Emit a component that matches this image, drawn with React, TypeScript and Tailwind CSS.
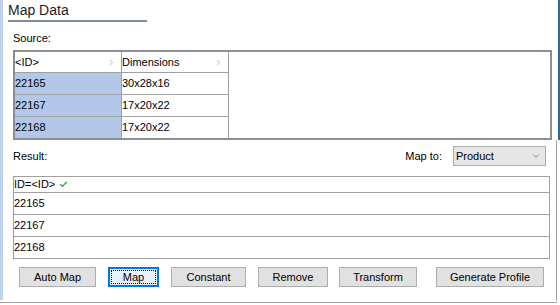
import { Check, ChevronDown, ChevronRight } from 'lucide-react'

const sourceRows = [
    { id: '22165', dim: '30x28x16' },
    { id: '22167', dim: '17x20x22' },
    { id: '22168', dim: '17x20x22' },
]

const resultRows = ['22165', '22167', '22168']

const buttons = [
    { label: 'Auto Map', w: 'w-[77px]', ml: 'ml-[11px]' },
    { label: 'Map', w: 'w-[51px]', ml: 'ml-[12px]', focused: true },
    { label: 'Constant', w: 'w-[75px]', ml: 'ml-[12px]' },
    { label: 'Remove', w: 'w-[70px]', ml: 'ml-[12px]' },
    { label: 'Transform', w: 'w-[78px]', ml: 'ml-[11px]' },
    { label: 'Generate Profile', w: 'w-[108px]', ml: 'ml-[19px]' },
]

export default function App() {
    return (
        <div className="w-[560px] h-[305px] bg-white flex flex-col text-[11px] text-black font-['Liberation_Sans',Arial,sans-serif]">
            <div className="flex h-[301px]">
                {/* Panel */}
                <div className="flex-1 flex flex-col border-l-[3px] border-l-[#bdd1ec] h-[300px] pl-[5px]">
                    {/* Title */}
                    <div className="h-[22px] flex flex-col">
                        <div className="text-[14px] leading-[18px] pt-[1px] text-[#1e1e1e]">Map Data</div>
                        <div className="mt-[1px] w-[139px] h-[2px] bg-[#7d8c9c]" />
                    </div>

                    <div className="pl-[5px] mt-[10px] leading-[13px]">Source:</div>

                    {/* Source table */}
                    <div className="ml-[5px] mt-[5px] w-[539px] h-[90px] border-2 border-[#8d8d95] flex">
                        <div className="flex flex-col">
                            <div className="flex h-[21px] border-b border-[#a0a0a0]">
                                <div className="w-[107px] border-r border-[#a0a0a0] flex items-center justify-between pr-[5px]">
                                    <span>&lt;ID&gt;</span>
                                    <ChevronRight className="w-[9px] h-[9px] text-[#9a9a9a]" strokeWidth={2} />
                                </div>
                                <div className="w-[107px] border-r border-[#a0a0a0] flex items-center justify-between pr-[5px]">
                                    <span>Dimensions</span>
                                    <ChevronRight className="w-[9px] h-[9px] text-[#9a9a9a]" strokeWidth={2} />
                                </div>
                            </div>
                            {sourceRows.map((r, i) => (
                                <div
                                    key={i}
                                    className={`flex ${i < sourceRows.length - 1 ? 'h-[22px] border-b border-[#a0a0a0]' : 'h-[21px]'}`}
                                >
                                    <div className="w-[107px] bg-[#b3c8e8] border-r border-[#a0a0a0] flex items-center">
                                        {r.id}
                                    </div>
                                    <div className="w-[107px] border-r border-[#a0a0a0] flex items-center">{r.dim}</div>
                                </div>
                            ))}
                        </div>
                    </div>

                    {/* Result header */}
                    <div className="flex items-center h-[20px] mt-[6px] pl-[5px]">
                        <span className="flex-1">Result:</span>
                        <span className="mr-[11px]">Map to:</span>
                        <div className="w-[93px] h-[20px] bg-[#e5e5e5] border border-[#adadad] flex items-center justify-between pl-[2px] pr-[4px] mr-[10px]">
                            <span>Product</span>
                            <ChevronDown className="w-[10px] h-[10px] text-[#555]" strokeWidth={1.5} />
                        </div>
                    </div>

                    {/* Result table */}
                    <div className="ml-[5px] mt-[10px] w-[537px] border-t border-x border-[#a0a0a0]">
                        <div className="h-[16px] border-b border-[#a0a0a0] flex items-center">
                            <span>ID=&lt;ID&gt;</span>
                            <Check className="ml-[4px] w-[9px] h-[9px] text-[#2f9a34]" strokeWidth={3} />
                        </div>
                        {resultRows.map((r, i) => (
                            <div key={i} className="h-[22px] border-b border-[#a0a0a0] flex items-center">
                                {r}
                            </div>
                        ))}
                    </div>

                    {/* Buttons */}
                    <div className="flex mt-[8px]">
                        {buttons.map((b, i) =>
                            b.focused ? (
                                <div
                                    key={i}
                                    className={`${b.w} ${b.ml} h-[20px] border-2 border-[#0078d7] bg-[#e5f1fb] p-[1px]`}
                                >
                                    <div className="w-full h-full border border-dotted border-black flex items-center justify-center">
                                        {b.label}
                                    </div>
                                </div>
                            ) : (
                                <div
                                    key={i}
                                    className={`${b.w} ${b.ml} h-[20px] border border-[#adadad] bg-[#e1e1e1] flex items-center justify-center`}
                                >
                                    {b.label}
                                </div>
                            )
                        )}
                    </div>
                </div>
                {/* Right edge */}
                <div className="w-[4px] flex flex-col">
                    <div className="h-[140px] flex justify-end">
                        <div className="w-[2px] bg-[#2d6aa0]" />
                    </div>
                    <div className="flex-1 border-l border-[#a0a0a0]" />
                </div>
            </div>
            <div className="h-[1px] w-[557px] bg-[#a0a0a0] mt-[1px]" />
        </div>
    )
}
